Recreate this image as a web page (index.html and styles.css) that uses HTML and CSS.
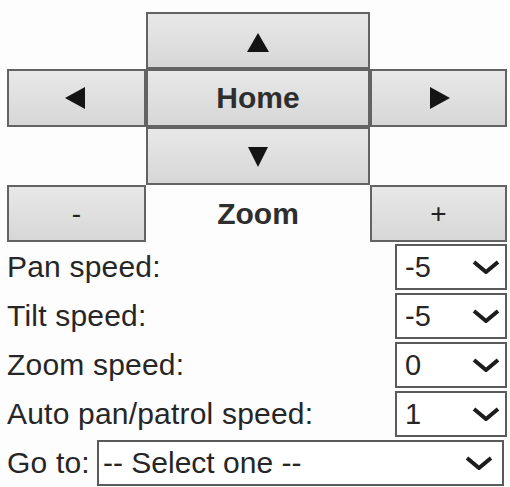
FILE: index.html
```html
<!DOCTYPE html>
<html lang="en">
<head>
<meta charset="utf-8">
<title>PTZ control</title>
<link rel="stylesheet" href="styles.css">
</head>
<body>
<div class="panel">
  <div class="pad">
    <button class="btn up" type="button" aria-label="Up">
      <svg class="tri" width="22" height="19" viewBox="0 0 22 19"><polygon points="11,0 22,19 0,19"/></svg>
    </button>
    <button class="btn left" type="button" aria-label="Left">
      <svg class="tri" width="20" height="22" viewBox="0 0 20 22"><polygon points="0,11 20,0 20,22"/></svg>
    </button>
    <button class="btn home" type="button">Home</button>
    <button class="btn right" type="button" aria-label="Right">
      <svg class="tri" width="20" height="22" viewBox="0 0 20 22"><polygon points="20,11 0,0 0,22"/></svg>
    </button>
    <button class="btn down" type="button" aria-label="Down">
      <svg class="tri" width="20" height="20" viewBox="0 0 20 20"><polygon points="10,20 20,0 0,0"/></svg>
    </button>
    <button class="btn minus sign" type="button">-</button>
    <div class="zoom-label">Zoom</div>
    <button class="btn plus sign" type="button">+</button>
  </div>

  <div class="settings">
    <div class="row">
      <span class="label">Pan speed:</span>
      <div class="sel small">
        <span class="val">-5</span>
        <svg class="chev" width="28" height="14" viewBox="0 0 28 14"><polyline points="2,2 14,12 26,2"/></svg>
      </div>
    </div>
    <div class="row">
      <span class="label">Tilt speed:</span>
      <div class="sel small">
        <span class="val">-5</span>
        <svg class="chev" width="28" height="14" viewBox="0 0 28 14"><polyline points="2,2 14,12 26,2"/></svg>
      </div>
    </div>
    <div class="row">
      <span class="label">Zoom speed:</span>
      <div class="sel small">
        <span class="val">0</span>
        <svg class="chev" width="28" height="14" viewBox="0 0 28 14"><polyline points="2,2 14,12 26,2"/></svg>
      </div>
    </div>
    <div class="row">
      <span class="label">Auto pan/patrol speed:</span>
      <div class="sel small">
        <span class="val">1</span>
        <svg class="chev" width="28" height="14" viewBox="0 0 28 14"><polyline points="2,2 14,12 26,2"/></svg>
      </div>
    </div>
    <div class="row">
      <span class="label">Go to:</span>
      <div class="sel wide">
        <span class="val">-- Select one --</span>
        <svg class="chev" width="28" height="14" viewBox="0 0 28 14"><polyline points="2,2 14,12 26,2"/></svg>
      </div>
    </div>
  </div>
</div>
</body>
</html>
```

FILE: styles.css
```css
html, body {
  margin: 0;
  padding: 0;
  background: #fdfdfd;
}

body {
  font-family: "Liberation Sans", Arial, sans-serif;
  color: #262626;
}

.panel {
  width: 500px;
  padding: 12px 0 0 7px;
}

.pad {
  display: grid;
  grid-template-columns: 139px 224px 137px;
  grid-template-rows: 57px 58px 58px 57px;
}

.btn {
  margin: 0;
  padding: 0;
  border: 2px solid #636363;
  background: linear-gradient(#e8e8e8, #d7d7d7);
  font-family: inherit;
  font-size: 30px;
  font-weight: bold;
  color: #2e2e2e;
  display: flex;
  align-items: center;
  justify-content: center;
}

.btn.sign {
  font-weight: normal;
  font-size: 28px;
  color: #222;
}

.tri {
  fill: #141414;
}

.up    { grid-column: 2; grid-row: 1; }
.left  { grid-column: 1; grid-row: 2; }
.home  { grid-column: 2; grid-row: 2; }
.right { grid-column: 3; grid-row: 2; }
.down  { grid-column: 2; grid-row: 3; }
.minus { grid-column: 1; grid-row: 4; }
.plus  { grid-column: 3; grid-row: 4; }

.up .tri { margin-top: 4px; }
.down .tri { margin-top: 2px; }
.left .tri { margin-left: -3px; }
.right .tri { margin-left: 3px; }

.zoom-label {
  grid-column: 2;
  grid-row: 4;
  display: flex;
  align-items: center;
  justify-content: center;
  font-size: 30px;
  font-weight: bold;
  color: #2e2e2e;
}

.settings {
  margin-top: 2px;
  display: flex;
  flex-direction: column;
  gap: 3px;
}

.row {
  display: flex;
  align-items: center;
  justify-content: space-between;
  height: 46px;
}

.label {
  font-size: 30px;
  color: #262626;
  letter-spacing: 0.2px;
}

.sel {
  box-sizing: border-box;
  height: 46px;
  border: 2px solid #5a5a5a;
  background: #fff;
  display: flex;
  align-items: center;
  justify-content: space-between;
}

.sel.small {
  width: 112px;
  padding: 0 5px 0 8px;
}

.sel.wide {
  width: 407px;
  margin-right: 3px;
  padding: 0 9px 0 4px;
}

.sel.small .val {
  font-size: 29px;
}

.sel.wide .val {
  font-size: 30px;
}

.chev {
  fill: none;
  stroke: #1c1c1c;
  stroke-width: 4;
  stroke-linejoin: miter;
}
```
